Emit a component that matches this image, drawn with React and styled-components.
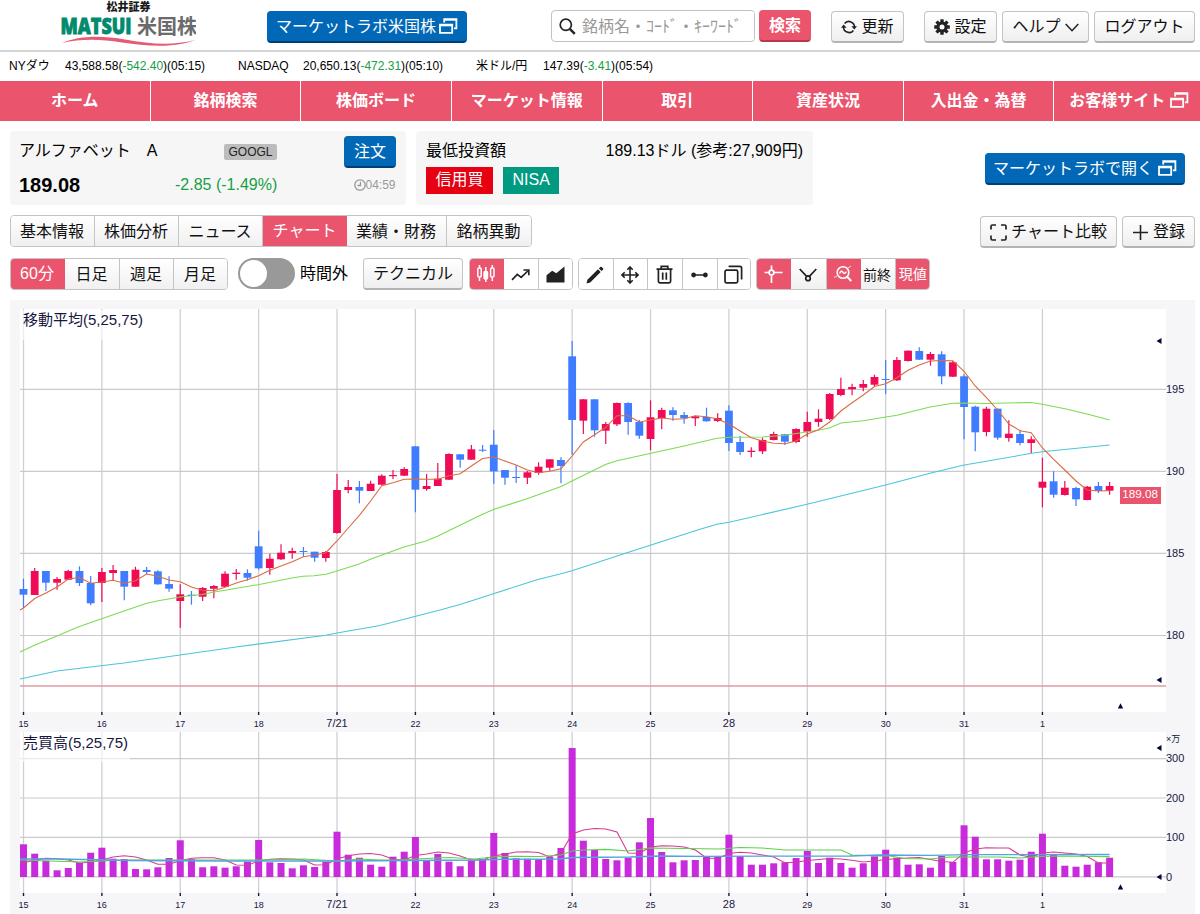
import React from "react";
import styled, { createGlobalStyle, css } from "styled-components";

const FONT = '"Liberation Sans", "Noto Sans CJK JP", sans-serif';
const PINK = "#ea546c";

const GlobalStyle = createGlobalStyle`
  *, *::before, *::after { box-sizing: border-box; }
  body { margin: 0; background: #fff; color: #000; font: 16px/1 ${FONT}; overflow: hidden; }
  button, input { font: inherit; margin: 0; }
  svg { display: block; flex: none; }
`;

const Page = styled.div`
  width: 1200px;
  height: 914px;
  overflow: hidden;
  display: flex;
  flex-direction: column;
`;

/* header */
const Header = styled.header`
  flex: none;
  height: 52px;
  padding: 10px 5px 0 60px;
  border-bottom: 2px solid #d4d4d4;
  display: flex;
  align-items: flex-start;
`;
const Logo = styled.svg`
  margin: -10px 71px 0 0;
`;
const SearchBox = styled.label`
  width: 204px;
  height: 32px;
  margin: 0 4px 0 84px;
  padding: 0 0 0 7px;
  border: 1px solid #c2c2c2;
  border-radius: 4px;
  display: flex;
  align-items: center;
  gap: 6px;
`;
const SearchInput = styled.input`
  flex: 1;
  min-width: 0;
  height: 28px;
  padding: 1px 0 0;
  border: 0;
  outline: 0;
  &::placeholder { color: #999; opacity: 1; }
`;
const Button = styled.button`
  flex: none;
  width: ${(p) => p.$w}px;
  height: 32px;
  padding: 1px 0 0;
  margin: ${(p) => p.$m || "0"};
  border-radius: 4px;
  border: 1px solid #c4c4c4;
  border-bottom: 2px solid #b4b4b4;
  background: linear-gradient(#fff, #efefef);
  color: #111;
  white-space: nowrap;
  display: flex;
  align-items: center;
  justify-content: center;
  gap: ${(p) => p.$gap ?? 4}px;
  ${(p) => p.$kind === "blue" && css`
    background: #0068b7;
    border-color: #0068b7 #0068b7 #003f73;
    color: #fff;
  `}
  ${(p) => p.$kind === "pink" && css`
    background: ${PINK};
    border-color: ${PINK} ${PINK} #b5384e;
    color: #fff;
    font-weight: bold;
    padding: 0;
  `}
`;

/* ticker and navigation */
const Ticker = styled.div`
  flex: none;
  height: 29px;
  padding: 0 0 1px 9px;
  font-size: 12px;
  display: flex;
  align-items: center;
`;
const TickerItem = styled.div`
  width: ${(p) => p.$w}px;
  display: flex;
`;
const TickerName = styled.span`
  width: ${(p) => p.$w}px;
`;
const Green = styled.span`
  color: #16a045;
`;
const Nav = styled.nav`
  flex: none;
  width: 1204px;
  height: 40px;
  display: flex;
  gap: 1px;
`;
const NavItem = styled.a`
  flex: 1 1 0;
  background: ${PINK};
  color: #fff;
  font-weight: bold;
  display: flex;
  align-items: center;
  justify-content: center;
  gap: 5px;
`;

/* quote summary */
const Summary = styled.section`
  flex: none;
  height: 74px;
  margin: 10px 15px 0 10px;
  display: flex;
  gap: 10px;
`;
const Card = styled.div`
  width: ${(p) => p.$w}px;
  padding: ${(p) => p.$p};
  background: #f6f6f6;
  border-radius: 4px;
  display: flex;
  flex-direction: column;
`;
const CardRow = styled.div`
  height: ${(p) => p.$h}px;
  padding-bottom: ${(p) => p.$pb || 0}px;
  display: flex;
  align-items: center;
  justify-content: ${(p) => (p.$spread ? "space-between" : "flex-start")};
  gap: ${(p) => p.$gap || 0}px;
`;
const StockName = styled.div`
  width: 205px;
  padding-bottom: 2px;
  white-space: pre;
`;
const Symbol = styled.span`
  width: 53px;
  height: 16px;
  margin-right: 67px;
  border-radius: 2px;
  background: #bcbcbc;
  color: #222;
  font-size: 12px;
  display: flex;
  align-items: center;
  justify-content: center;
`;
const Price = styled.strong`
  width: 156px;
  font-size: 20px;
`;
const Change = styled.span`
  width: 178.5px;
  color: #16a045;
`;
const Time = styled.span`
  color: #999;
  font-size: 12px;
  padding-top: 1px;
  display: flex;
  align-items: center;
`;
const Tag = styled.span`
  height: 27px;
  padding: 0 9.5px 1px;
  background: ${(p) => p.$bg};
  color: #fff;
  display: flex;
  align-items: center;
`;

/* tab and tool rows */
const TabRow = styled.div`
  flex: none;
  height: 33px;
  margin: 10px 5px 0 10px;
  display: flex;
`;
const ToolRow = styled.div`
  flex: none;
  height: 32px;
  margin: 10px 5px 0 10px;
  display: flex;
`;
const Group = styled.div`
  height: 32px;
  margin-left: ${(p) => p.$ml || 0}px;
  border: 1px solid #c4c4c4;
  border-radius: 4px;
  overflow: hidden;
  display: flex;
`;
const Segment = styled.button`
  width: ${(p) => p.$w}px;
  flex: none;
  padding: 1px 1px 0 0;
  border: 0;
  border-right: 1px solid #c4c4c4;
  background: linear-gradient(#fff, ${(p) => (p.$flat ? "#fff" : "#f0f0f0")});
  color: #111;
  font-size: ${(p) => p.$fs || 16}px;
  white-space: nowrap;
  display: flex;
  align-items: center;
  justify-content: center;
  &:last-child { border-right: 0; }
  ${(p) => p.$active && css`
    background: ${PINK};
    color: #fff;
    border-color: ${PINK};
    margin: -1px 0;
    padding: 0;
    &:first-child { margin-left: -1px; width: ${p.$w + 1}px; }
    &:last-child { margin-right: -1px; width: ${p.$w + 1}px; }
  `}
`;
const Spacer = styled.div`
  flex: 1;
`;
const Toggle = styled.div`
  width: 57px;
  height: 31px;
  margin-left: 10px;
  padding: 2px;
  border-radius: 16px;
  background: #999;
  &::before {
    content: "";
    display: block;
    width: 27px;
    height: 27px;
    border-radius: 50%;
    background: #fff;
  }
`;
const ToggleLabel = styled.span`
  width: 63px;
  padding: 8px 0 0 5px;
`;

/* chart */
const ChartArea = styled.main`
  flex: none;
  margin: 10px 5px 0 10px;
  height: 614px;
  background: #f6f6f9;
  display: flex;
  flex-direction: column;
`;
const Plot = styled.svg`
  font-family: ${FONT};
`;

const IconLift = styled.span`
  padding-bottom: 2px;
`;
const WindowIcon = () => (
  <IconLift>
    <svg width="19" height="16" viewBox="0 0 19 16" fill="none" stroke="#fff" strokeWidth="1.8">
      <path d="M5.2 4.6V1.2H17.4V10.3H15" />
      <path d="M5.2 1.8H17.4" />
      <path d="M1 6.6H13.2V14.8H1Z" />
      <path d="M1 7.4H13.2" />
    </svg>
  </IconLift>
);
const SearchIcon = () => (
  <svg width="17" height="17" viewBox="0 0 17 17" fill="none" stroke="#222">
    <circle cx="6.8" cy="6.8" r="5.6" strokeWidth="1.7" />
    <path d="M10.8 10.8L15.8 15.8" strokeWidth="2.4" />
  </svg>
);
const RefreshIcon = () => (
  <svg width="16" height="14" viewBox="0 0 16 14" fill="none" stroke="#222" strokeWidth="1.6">
    <path d="M3.6 3.6A5.5 5.5 0 0 1 13.4 7.5" />
    <path d="M12.4 10.4A5.5 5.5 0 0 1 2.6 6.5" />
    <path d="M10.4 6.2H16L13.3 9.6Z M0 7.8H5.6L2.7 4.4Z" fill="#222" stroke="none" />
  </svg>
);
const GearIcon = () => (
  <svg width="16" height="16" viewBox="-8 -8 16 16" fill="#222">
    {[0, 45, 90, 135].map((a) => (
      <rect key={a} x="-1.7" y="-7.8" width="3.4" height="15.6" rx="0.5" transform={`rotate(${a})`} />
    ))}
    <circle r="5.6" />
    <circle r="2.5" fill="#fafafa" />
  </svg>
);
const ChevronIcon = () => (
  <svg width="14" height="9" viewBox="0 0 14 9" fill="none" stroke="#222" strokeWidth="1.5">
    <path d="M0.7 1L7 7.7L13.3 1" />
  </svg>
);
const ClockIcon = () => (
  <svg width="12" height="12" viewBox="0 0 12 12" fill="none" stroke="#999" strokeWidth="1.3">
    <circle cx="6" cy="6" r="5.2" />
    <path d="M6.5 2.8V6.5H3.5" />
  </svg>
);
const ExpandIcon = () => (
  <svg width="17" height="17" viewBox="0 0 17 17" fill="none" stroke="#222" strokeWidth="1.7">
    <path d="M1 5.5V2.5Q1 1 2.5 1H6M11 1H14.5Q16 1 16 2.5V5.5M16 11.5V14.5Q16 16 14.5 16H11M6 16H2.5Q1 16 1 14.5V11.5" />
  </svg>
);
const PlusIcon = () => (
  <svg width="17" height="17" viewBox="0 0 17 17" stroke="#222" strokeWidth="1.6">
    <path d="M8.5 1V16M1 8.5H16" />
  </svg>
);
const CandleIcon = () => (
  <svg width="20" height="20" viewBox="0 0 20 20" fill="none" stroke="#fff" strokeWidth="1.5">
    <path d="M3.5 1V4M3.5 13V17M9.8 3V18M16.3 1V4M16.3 13V17" />
    <rect x="1.8" y="4" width="3.4" height="9" rx="1.2" />
    <rect x="8.1" y="7.5" width="3.4" height="7.5" rx="1" fill="#fff" />
    <rect x="14.6" y="4" width="3.4" height="9" rx="1.2" />
  </svg>
);
const LineIcon = () => (
  <svg width="19" height="12" viewBox="0 0 19 12" fill="none" stroke="#222" strokeWidth="1.7">
    <path d="M1 10.8L6.3 5.4L10.2 8.4L16.8 2" />
    <path d="M12.5 1H17.8V6.2" />
  </svg>
);
const AreaIcon = () => (
  <svg width="19" height="17" viewBox="0 0 19 17" fill="#222">
    <path d="M0.5 16.5V9.2L6.2 4.8L10.3 7.3L18.5 0.5V16.5Z" />
  </svg>
);
const PencilIcon = () => (
  <svg width="18" height="18" viewBox="0 0 18 18" fill="#222">
    <path d="M0.5 17.5L1.4 13.8L12 3.3L14.7 6L4.2 16.6Z M12.9 2.4L14.3 1Q15 0.4 15.7 1L17 2.3Q17.6 3 17 3.7L15.6 5.1Z" />
  </svg>
);
const MoveIcon = () => (
  <svg width="18" height="18" viewBox="0 0 18 18" fill="none" stroke="#222" strokeWidth="1.6">
    <path d="M9 1V17M1 9H17M6.3 3.7L9 1L11.7 3.7M6.3 14.3L9 17L11.7 14.3M3.7 6.3L1 9L3.7 11.7M14.3 6.3L17 9L14.3 11.7" />
  </svg>
);
const TrashIcon = () => (
  <svg width="17" height="19" viewBox="0 0 17 19" fill="none" stroke="#222" strokeWidth="1.7">
    <path d="M0.5 4.2H16.5M5.2 4V1.3H11.8V4M2.4 4.5V16.3Q2.4 17.9 4 17.9H13Q14.6 17.9 14.6 16.3V4.5M6.7 7.5V14.8M10.3 7.5V14.8" />
  </svg>
);
const SegmentIcon = () => (
  <svg width="17" height="6" viewBox="0 0 17 6" fill="#222">
    <path d="M3 3H14" stroke="#222" strokeWidth="1.6" />
    <circle cx="2.6" cy="3" r="2.4" />
    <circle cx="14.4" cy="3" r="2.4" />
  </svg>
);
const CopyIcon = () => (
  <svg width="19" height="19" viewBox="0 0 19 19" fill="none" stroke="#222" strokeWidth="1.7">
    <rect x="1" y="5.2" width="12.7" height="12.7" rx="1.6" />
    <path d="M4.6 1.4H15.8Q17.6 1.4 17.6 3.2V14.4" />
  </svg>
);
const CrosshairIcon = () => (
  <svg width="19" height="19" viewBox="0 0 19 19" fill="none" stroke="#fff" strokeWidth="1.7">
    <path d="M7.5 0.5V5M7.5 10V18M0.5 7.5H5M10 7.5H18.5" />
    <circle cx="7.5" cy="7.5" r="2.4" />
  </svg>
);
const ForkIcon = () => (
  <svg width="18" height="14" viewBox="0 0 18 14" fill="none" stroke="#222" strokeWidth="1.7">
    <path d="M0.7 1L7.4 8.2H10.6L17.3 1" />
    <circle cx="9" cy="10.4" r="2.3" />
  </svg>
);
const ZoomIcon = () => (
  <svg width="18" height="18" viewBox="0 0 18 18" fill="none" stroke="#fff">
    <circle cx="9" cy="7.5" r="5.8" strokeWidth="1.6" />
    <path d="M13.2 11.8L17.2 16" strokeWidth="2" />
    <path d="M5.6 8.6Q7.2 4.6 8.8 7.2T12.4 6.6" strokeWidth="1.4" />
    <path d="M0 12.5L3 11M14 3L17 1" strokeWidth="0.8" />
  </svg>
);

const X0 = 23.5;
const STEP = 11.197;
const cx = (i) => X0 + STEP * i;

/* direction, high, body top, body bottom, low */
const CANDLES = `b 578.7 589 594.7 608|r 568 571 595 595|b 571 571 582.7 591|r 577 579 582.7 589.7|r 569.7 571 579.7 580|b 566.3 571 583 586|b 576 583 603.3 605.3|r 568 572 583 602|r 565 570 573 580|b 571 571 586.7 600.3|r 566.7 569.7 586.7 586.7|b 567 570 572 574.3|b 570.3 571.3 584.3 584.7|b 576.3 584 588.7 591.7|r 584.3 594.3 601 627.7|b 591 594.7 596 604.7|r 587 588 596.7 601|r 585 586 588.7 598.3|r 571.3 573.7 586.7 587|r 569 572.7 574 579.7|b 569.3 573 577.7 580.7|b 530.7 546.3 568.3 569.7|r 553.7 558.7 568 574.7|r 544.3 552.7 559.3 560|r 547.7 551 553 558.7|b 547 551 552 556.7|b 551.7 551.7 557.7 561.7|r 551 552 558 561.7|r 474 490 533 533.7|r 480 487 490 493.3|b 481 487 490.7 503.3|r 480.7 483.7 491 491|r 474.3 475.7 484.7 485|r 470 475 476.2 479|r 467.3 469 475.7 476|b 446.3 446.3 489.7 512.3|r 474 486 489 490.7|r 463 478.7 486 486|r 453.3 454 479.7 480|b 454.3 454.3 459.7 467.7|r 445 449.3 459.7 460|b 445 449.7 450.7 452|b 430 444.7 471.3 483.7|b 470 470 477.7 484.7|b 465.3 477 478 483|r 471 472.3 477.7 484|r 462.3 466.7 473 474.7|r 459.3 459.3 467.7 470.7|b 457.3 460 466 483.3|b 341 356.3 420 454.7|r 399.3 399.3 420.7 434|b 399.3 399.3 430.3 436.7|r 422 424 430.7 444|r 402.5 403 424.3 426|b 402.3 403 422 434.7|b 420 422 435.7 438.7|r 400.3 417.3 439 450.3|r 407.7 410 418 429.3|b 407.3 410.3 415 420.7|b 412 415 418.3 423.7|r 415.7 416.3 418.3 426|b 407.7 417 421.3 421.7|r 413.3 418 421 422|b 405.3 410.7 443 451|b 436 442 452 455|r 447.3 450.7 452 457.3|r 437.7 440 451.3 454|r 431.7 434 440 440.5|b 434 434.3 441.7 445|r 428.3 429 442 443.3|r 411.7 422 431.7 436.7|r 409.3 418.7 422 426.7|r 393 394 419 420|r 377.7 389 395 396.3|r 383.7 387 389.3 395.3|r 380 384 387.7 391.3|r 374.7 377 384.7 386|b 360 379 380 394|r 357 360 380.3 381|r 350.5 350.7 361 361.5|b 347.3 351 359.7 360|r 352 354 359.7 365.7|b 351.3 354.3 376.3 384.3|r 361 362.3 376.7 377|b 374.3 376.3 407 439.3|b 405.7 406.7 432.3 451.3|r 406.7 408.7 432 436.3|b 408.5 408.7 437.7 439.7|r 420.3 433.7 438 441.7|b 430 434 443 445.3|r 436.3 439.3 443 453|r 457.7 481.7 487.7 507.3|b 471.3 481.3 494.7 497.7|r 481 487.7 495 495.5|b 486.7 488 499.3 506|r 486 486.7 500 500.3|b 482 486 491 493|r 482 486 490.7 494.7`
  .split("|")
  .map((s) => {
    const [d, ...v] = s.split(" ");
    return [d, ...v.map(Number)];
  });

const MA5 = [608, 598.5, 593, 587, 579, 577.5, 583.3, 582, 580.3, 583.3, 580.7, 574, 576.3, 580, 581.7, 587, 590.3, 590.7, 587.3, 583, 579.7, 575.7, 570.3, 566, 561.7, 556.7, 555, 552.7, 541, 528, 515.3, 501, 485.7, 482.7, 479.3, 479, 479.3, 479.3, 475.7, 473.7, 466, 458.5, 457, 461, 465, 470, 472.7, 471.3, 468.7, 456, 442, 434.7, 427.3, 415.7, 415.7, 422, 420, 418, 419.3, 418.7, 415.7, 416.7, 419, 424, 431, 437.7, 441, 443.3, 443.7, 441, 434, 429.7, 422, 411, 402.7, 395, 386.5, 383.7, 377.7, 370.3, 365, 361, 360.5, 360.7, 371.3, 386, 397.7, 410, 424, 430.7, 432.7, 448, 459.3, 470, 481, 490, 491, 490.7];
const MA25 = "20,652 35,645 57,636 78,627 101,619 124,611 146,603.5 157,601 180,597 202,594.5 213,592.3 258,584.7 292,578 303,576.3 314,575.7 326,574.3 337,571 359,564 371,559 393,551 404,547 426,541 438,536 482,514.5 493.5,509.5 527,498.7 561,486.5 572,481 606,464.3 617,460.7 650,453.5 684,446 717,438.3 729,437.3 762,437 785,435.3 818,430.3 830,427.7 841,423 863,420.7 886,417 897,415.3 930,407 953,403.3 964,403 985,403.5 1031,402.5 1042,404.3 1065,408.7 1087,414 1109.6,420";
const MA75 = "20,679 57,671 124,663 180,655 236,647 326,635.3 337,633 380,625.5 440,610 460,604.5 493.5,593.7 537,579.7 560,574 572,570.7 630,551.7 700,529.3 717,524.3 729,522.3 807,504.3 885.7,485 930,473.3 963,465.3 1031.7,453.3 1042,451.7 1109.6,445";

const VOLUME_TOPS = [844.3, 853.7, 860.7, 870.3, 868, 863, 852.7, 847.7, 858.7, 859, 869, 869.3, 867.3, 858, 840.3, 859, 867.3, 866.3, 867.7, 866.3, 861.7, 840, 862.3, 863, 868.3, 865.3, 867, 861.7, 831.7, 854.7, 857.7, 864.7, 866.7, 856.7, 851.7, 837, 861, 854, 861.7, 866.3, 860.3, 859, 833, 853, 858.3, 858.7, 859, 857, 848, 748, 840.7, 850, 859, 860.3, 857.7, 842.3, 818, 852, 862.3, 860.3, 860, 856, 856.3, 834.7, 856, 864.7, 864.7, 863.3, 862.3, 858, 851, 863, 857.7, 863, 867.7, 863.3, 856.3, 849.7, 857.7, 864.7, 864.3, 867.7, 856, 862, 825.3, 836.7, 859.3, 859.3, 860.7, 859.7, 851.7, 833.7, 854.3, 865.7, 866.7, 864.7, 862.3, 857.7];
const VMA5 = [863, 860, 858.3, 858.7, 860, 863, 862.3, 860, 857, 855.7, 857, 860, 864.3, 864.3, 860.7, 858.3, 857.7, 857.7, 860, 865, 865.3, 861, 859.3, 858.7, 859, 860, 865, 864.7, 859, 855.7, 854, 853.5, 855, 859.3, 860, 855.5, 854, 852, 853, 856, 860, 860, 856, 854, 852, 851.7, 852.5, 857, 853, 834, 830, 828.5, 829, 832, 853, 853.3, 847, 845.7, 846, 847, 850, 858, 858.5, 853.5, 852.3, 853, 855, 857, 862.7, 862.3, 860.5, 859.5, 858.5, 859, 860.3, 862, 861, 859.5, 858.7, 858, 857.5, 859.5, 861.5, 862.3, 853, 849, 847.7, 848, 848, 855, 857.3, 853, 852, 853, 854, 856.5, 863, 863];
const VMA25 = "20,860 80,862 124,860 258,860 303,859 337,861 359,859 380,860 400,860 415,859 450,857.5 475,859 493,857 515,856.3 540,856.5 561,855 572,851 584,850 606,849.3 628,851 650,848 720,849 740,847.5 762,848 785,850 841,850 852,855 880,856 890,856 905,858.5 930,859 950,857 1000,857 1020,858 1040,856.5 1060,856 1109.6,856.7";
const VMA75 = "20,859 60,859 130,860.5 220,861 340,861 480,860 500,859.3 560,859 572,857.5 630,857 660,856 700,856.3 850,856 880,855 930,855.3 970,854.7 1109.6,854.5";

const DAYS = ["15", "16", "17", "18", "7/21", "22", "23", "24", "25", "28", "29", "30", "31", "1"];
const INK = "#16163f";
const toPoints = (ys, start) => `${start} ` + ys.map((y, i) => `${cx(i)},${y}`).join(" ");
const LeftMark = ({ y }) => <path d={`M1156.5 ${y}L1161.5 ${y - 3}V${y + 3}Z`} fill="#06063a" />;
const UpMark = ({ y }) => <path d={`M1120.5 ${y - 2.7}L1123.2 ${y + 2.5}H1117.8Z`} fill="#06063a" />;

function DayAxis({ y }) {
  return DAYS.map((d, i) => {
    const x = cx(i * 7);
    const week = d === "7/21" || d === "28";
    return (
      <g key={d}>
        <path d={`M${x} ${y}v3`} stroke={INK} strokeWidth="1.4" />
        <text x={x} y={y + (week ? 15 : 14.5)} fontSize={week ? 11 : 9} textAnchor="middle" fill={INK}>{d}</text>
      </g>
    );
  });
}
const DayLines = ({ top, bottom }) =>
  DAYS.map((d, i) => <path key={d} d={`M${cx(i * 7)} ${top}V${bottom}`} stroke="#cfd0d3" strokeWidth="1.3" />);

function PriceChart() {
  return (
    <Plot width="1185" height="430" viewBox="10 300 1185 430">
      <rect x="20" y="309" width="1146" height="403" fill="#fff" />
      <DayLines top={309} bottom={712} />
      {[389.4, 471.4, 553.4, 635.5].map((y, i) => (
        <g key={y}>
          <path d={`M20 ${y}H1166`} stroke="#c9cacc" strokeWidth="1.2" />
          <text x="1166" y={y + 3.5} fontSize="11" fill={INK}>{195 - i * 5}</text>
        </g>
      ))}
      <rect x="20" y="310" width="128" height="30" fill="#fff" opacity="0.6" />
      <path d="M20 686H1166" stroke="#e29aa4" strokeWidth="1.4" />
      {CANDLES.map(([d, h, t, b, l], i) => {
        const c = d === "r" ? "#f00b55" : "#3f7cff";
        return (
          <g key={i} fill={c}>
            <path d={`M${cx(i)} ${h}V${l}`} stroke={c} strokeWidth="1.2" />
            <rect x={cx(i) - 3.9} y={t} width="7.8" height={b - t} />
          </g>
        );
      })}
      <polyline points={MA75} fill="none" stroke="#4cc5d8" strokeWidth="1.1" />
      <polyline points={MA25} fill="none" stroke="#7bdc50" strokeWidth="1.1" />
      <polyline points={toPoints(MA5, "20,610")} fill="none" stroke="#db6a42" strokeWidth="1.1" />
      <text x="23" y="325" fontSize="15" fill={INK}>移動平均(5,25,75)</text>
      <rect x="1120" y="487" width="41" height="17" fill={PINK} />
      <text x="1122.3" y="497.8" fontSize="11.7" fill="#fff">189.08</text>
      <LeftMark y={341} />
      <LeftMark y={680} />
      <UpMark y={706} />
      <DayAxis y={712} />
    </Plot>
  );
}

function VolumeChart() {
  return (
    <Plot width="1185" height="184" viewBox="10 730 1185 184">
      <rect x="20" y="732" width="1146" height="161" fill="#fff" />
      <DayLines top={732} bottom={893} />
      {[758.6, 798, 837.4, 876.8].map((y, i) => (
        <g key={y}>
          <path d={`M20 ${y}H1166`} stroke="#c9cacc" strokeWidth="1.2" />
          <text x="1166" y={y + 3.7} fontSize="11" fill={INK}>{300 - i * 100}</text>
        </g>
      ))}
      <rect x="20" y="732" width="110" height="30" fill="#fff" opacity="0.6" />
      {VOLUME_TOPS.map((y, i) => (
        <rect key={i} x={Math.max(20, cx(i) - 3.5)} y={y} width="7" height={877 - y} fill="#c72bdc" />
      ))}
      <polyline points={toPoints(VMA5, "20,862.5")} fill="none" stroke="#d63a92" strokeWidth="1.1" />
      <polyline points={VMA25} fill="none" stroke="#5ed04c" strokeWidth="1.2" />
      <polyline points={VMA75} fill="none" stroke="#4fa6dc" strokeWidth="1.3" />
      <text x="23" y="748" fontSize="15" fill={INK}>売買高(5,25,75)</text>
      <text x="1166" y="741.5" fontSize="9" fill={INK}>×万</text>
      <LeftMark y={748} />
      <LeftMark y={877} />
      <UpMark y={887} />
      <DayAxis y={893} />
    </Plot>
  );
}

export default function App() {
  return (
    <Page>
      <GlobalStyle />
      <Header>
        <Logo width="136" height="50" viewBox="60 0 136 50" fontFamily={FONT}>
          <text x="106.5" y="11" fontSize="11" fontWeight="900" fill="#1a1a1a">松井証券</text>
          <text x="60.5" y="33.5" fontSize="23.5" fontWeight="800" fontFamily='"Open Sans", sans-serif' fill="#008a6e" stroke="#008a6e" strokeWidth="0.9" textLength="71" lengthAdjust="spacingAndGlyphs">MATSUI</text>
          <text x="137" y="34" fontSize="20" fontWeight="bold" fill="#6b6b6b">米国株</text>
          <path d="M62 43C78 36 100 35 125 39.5C150 44 172 46 195 40C174 48 148 46.5 122 42.5C98 38.5 80 39 62 43Z" fill="#e75a75" />
        </Logo>
        <Button $kind="blue" $w={200} $m="1px 0 0" $gap={3}>マーケットラボ米国株<WindowIcon /></Button>
        <SearchBox>
          <SearchIcon />
          <SearchInput placeholder="銘柄名・ｺｰﾄﾞ・ｷｰﾜｰﾄﾞ" />
        </SearchBox>
        <Button $kind="pink" $w={52}>検索</Button>
        <Button $w={73} $m="1px 0 0 20px">
          <RefreshIcon />更新
        </Button>
        <Button $w={73} $m="1px 0 0 20px"><GearIcon />設定</Button>
        <Button $w={87} $m="1px 0 0 5px"><span>ヘルプ</span><ChevronIcon /></Button>
        <Button $w={101} $m="1px 0 0 5px">ログアウト</Button>
      </Header>
      <Ticker>
        <TickerItem $w={229}><TickerName $w={56}>NYダウ</TickerName>43,588.58(<Green>-542.40</Green>)(05:15)</TickerItem>
        <TickerItem $w={238}><TickerName $w={65}>NASDAQ</TickerName>20,650.13(<Green>-472.31</Green>)(05:10)</TickerItem>
        <TickerItem $w={238}><TickerName $w={67}>米ドル/円</TickerName>147.39(<Green>-3.41</Green>)(05:54)</TickerItem>
      </Ticker>
      <Nav>
        {["ホーム", "銘柄検索", "株価ボード", "マーケット情報", "取引", "資産状況", "入出金・為替"].map((t) => (
          <NavItem key={t}>{t}</NavItem>
        ))}
        <NavItem>お客様サイト<WindowIcon /></NavItem>
      </Nav>
      <Summary>
        <Card $w={396} $p="5px 10px 0 9px">
          <CardRow $h={32}>
            <StockName>アルファベット　A</StockName>
            <Symbol>GOOGL</Symbol>
            <Button $kind="blue" $w={52}>注文</Button>
          </CardRow>
          <CardRow $h={33}>
            <Price>189.08</Price>
            <Change>-2.85 (-1.49%)</Change>
            <Time><ClockIcon />04:59</Time>
          </CardRow>
        </Card>
        <Card $w={397} $p="5px 10px 0 10px">
          <CardRow $h={31} $pb={2} $spread><span>最低投資額</span><span>189.13ドル (参考:27,909円)</span></CardRow>
          <CardRow $h={27} $gap={10}><Tag $bg="#e60012">信用買</Tag><Tag $bg="#009a80">NISA</Tag></CardRow>
        </Card>
        <Spacer />
        <Button $kind="blue" $w={200} $m="22px 0 0" $gap={5}>マーケットラボで開く<WindowIcon /></Button>
      </Summary>
      <TabRow>
        <Group>
          <Segment $w={84}>基本情報</Segment>
          <Segment $w={84}>株価分析</Segment>
          <Segment $w={84}>ニュース</Segment>
          <Segment $w={84} $active>チャート</Segment>
          <Segment $w={100}>業績・財務</Segment>
          <Segment $w={84}>銘柄異動</Segment>
        </Group>
        <Spacer />
        <Button $w={137} $m="1px 5px 0 0"><ExpandIcon />チャート比較</Button>
        <Button $w={73} $m="1px 0 0"><PlusIcon />登録</Button>
      </TabRow>
      <ToolRow>
        <Group>
          <Segment $w={54} $active>60分</Segment>
          <Segment $w={55}>日足</Segment>
          <Segment $w={54}>週足</Segment>
          <Segment $w={53}>月足</Segment>
        </Group>
        <Toggle />
        <ToggleLabel>時間外</ToggleLabel>
        <Button $w={100} $m="0 0 0 5px">テクニカル</Button>
        <Group $ml={6}>
          <Segment $w={34} $active><CandleIcon /></Segment>
          <Segment $w={35} $flat><LineIcon /></Segment>
          <Segment $w={33} $flat><AreaIcon /></Segment>
        </Group>
        <Group $ml={5}>
          <Segment $w={34.5} $flat><PencilIcon /></Segment>
          <Segment $w={34.5} $flat><MoveIcon /></Segment>
          <Segment $w={35} $flat><TrashIcon /></Segment>
          <Segment $w={34.5} $flat><SegmentIcon /></Segment>
          <Segment $w={32.5} $flat><CopyIcon /></Segment>
        </Group>
        <Group $ml={5}>
          <Segment $w={34} $active><CrosshairIcon /></Segment>
          <Segment $w={35.5}><ForkIcon /></Segment>
          <Segment $w={34} $active><ZoomIcon /></Segment>
          <Segment $w={35} $fs={14}>前終</Segment>
          <Segment $w={33.5} $fs={14} $active>現値</Segment>
        </Group>
      </ToolRow>
      <ChartArea>
        <PriceChart />
        <VolumeChart />
      </ChartArea>
    </Page>
  );
}
